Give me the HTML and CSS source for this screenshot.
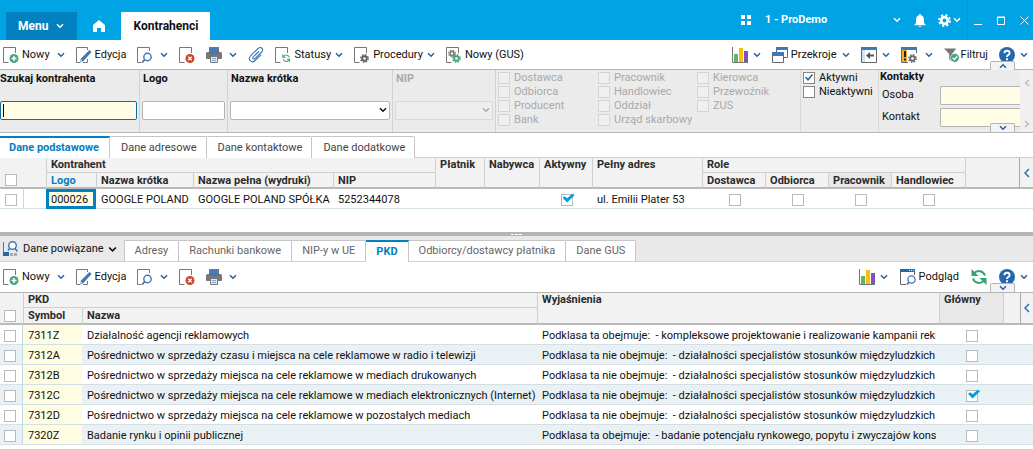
FILE: index.html
```html
<!DOCTYPE html>
<html lang="pl">
<head>
<meta charset="utf-8">
<meta name="viewport" content="width=device-width, initial-scale=1">
<title>Kontrahenci</title>
<link rel="stylesheet" href="styles.css">
</head>
<body>
<svg class="sprite" aria-hidden="true">
  <symbol id="chev" viewBox="0 0 8 6"><path d="M1 1.2 4 4.2 7 1.2" fill="none" stroke="currentColor" stroke-width="1.500"/></symbol>
  <symbol id="doc" viewBox="0 0 16 16"><path d="M5.500 15.500H.5V.5H12.500V6" fill="none" stroke="#777"/></symbol>
  <symbol id="gear" viewBox="0 0 12 12"><circle cx="6" cy="6" r="3" fill="none" stroke="currentColor" stroke-width="2.400"/><circle cx="6" cy="6" r="4.900" fill="none" stroke="currentColor" stroke-width="2" stroke-dasharray="2.100 1.749"/></symbol>
  <symbol id="doc-plus" viewBox="0 0 16 16"><use href="#doc"/><circle cx="11" cy="11.500" r="4.500" fill="#4ba57c"/><path d="M11 9v5M8.500 11.500h5" stroke="#fff" stroke-width="1.500"/></symbol>
  <symbol id="doc-pen" viewBox="0 0 16 16"><path d="M4 15.500H.5V.5H11.500V3M11.500 12v3.500H7" fill="none" stroke="#777"/><path d="m4 15.500 1-4L13.500 3l2 2L7 14.500z" fill="#3f77b8"/><path d="m4 15.500 1-3 1.800 1.800z" fill="#c4d6ea"/></symbol>
  <symbol id="doc-find" viewBox="0 0 16 16"><path d="M4.500 15.500H.5V.5H12.500V4" fill="none" stroke="#777"/><circle cx="10.500" cy="10" r="3.700" fill="#fff" stroke="#3f77b8" stroke-width="1.400"/><path d="m7.800 12.500-2.600 3" stroke="#3f77b8" stroke-width="1.800"/></symbol>
  <symbol id="doc-x" viewBox="0 0 16 16"><use href="#doc"/><circle cx="11" cy="11.500" r="4.500" fill="#cc4629"/><path d="m9.300 9.800 3.400 3.400m0-3.400-3.400 3.400" stroke="#fff" stroke-width="1.400"/></symbol>
  <symbol id="print" viewBox="0 0 16 16"><path d="M3 0h10v5H3z" fill="#777"/><path d="M4 1h8v4H4z" fill="#4b79b4"/><path d="M1.500 5h13q1.500 0 1.500 1.500V11q0 1-1 1H1q-1 0-1-1V6.500Q0 5 1.500 5z" fill="#777"/><path d="M3 4h10v2.500H3z" fill="#3f77b8"/><path d="M4.500 9.500h7v6h-7z" fill="#e3edf7" stroke="#777"/><path d="M6 11.500h4M6 13.500h4" stroke="#7fa5cf"/></symbol>
  <symbol id="clip" viewBox="0 0 16 16"><path d="m10.800 4.500-5.600 5.400c-1.300 1.300.4 3 1.700 1.700l6.800-6.600c2.800-2.800-1-6-3.600-3.500L2.500 8.800c-3.500 3.500 1.400 8 4.600 4.700l5.600-5.400" fill="none" stroke="#3f77b8" stroke-width="1.100" stroke-linecap="round"/></symbol>
  <symbol id="sync" viewBox="0 0 16 16"><path d="M14 6.500A6.300 6.300 0 0 0 3 4.500M2 9.500a6.300 6.300 0 0 0 11 2" fill="none" stroke="currentColor" stroke-width="2"/><path d="M.5 0v7h7L5 4.600zM15.500 16V9h-7l2.500 2.400z" fill="currentColor"/></symbol>
  <symbol id="doc-sync" viewBox="0 0 16 16"><use href="#doc"/><use href="#sync" x="7" y="7" width="8.500" height="8.500" color="#4ba57c"/></symbol>
  <symbol id="doc-gear" viewBox="0 0 16 16"><use href="#doc"/><use href="#gear" x="6" y="7" width="9" height="9" color="#606060"/></symbol>
  <symbol id="doc-gears" viewBox="0 0 16 16"><path d="M5.500 15.500H.5V.5H12.500V6" fill="none" stroke="#777"/><use href="#gear" x="2" y="2.500" width="8" height="8" color="#777"/><use href="#gear" x="6" y="7" width="9" height="9" color="#4ba57c"/></symbol>
  <symbol id="chart" viewBox="0 0 16 16"><path d="M.5 0v15.500H16" fill="none" stroke="#777"/><path d="M2 7h4v8H2z" fill="#5cba5c"/><path d="M7 1h4v14H7z" fill="#fdbb0b"/><path d="M12 4h4v11h-4z" fill="#7b52c0"/></symbol>
  <symbol id="windows" viewBox="0 0 16 16"><path d="M4.500 5V.5h11v10H12M.5 6v9.500h11V6" fill="none" stroke="#666"/><path d="M4 0h12v3H4zM0 5h12v4H0z" fill="#3f77b8"/></symbol>
  <symbol id="panel" viewBox="0 0 16 16"><path d="M.5.500h15v15H.5z" fill="#fff" stroke="#666"/><path d="M0 0h16v3H0z" fill="#3f77b8"/><path d="M1 3h3v12H1z" fill="#cfe6f7"/><path d="M5 8.500 9 5v2.500h4v2H9V12z" fill="#555"/></symbol>
  <symbol id="alert" viewBox="0 0 16 16"><path d="M.5.500h15V6M.5.500v15H7" fill="none" stroke="#666"/><path d="M0 0h16v3H0z" fill="#3f77b8"/><path d="M1 3h5v12H1z" fill="#f2b02c"/><path d="M3 4h2v6H3zM3 11.500h2v2H3z" fill="#222"/><use href="#gear" x="7" y="7" width="9" height="9" color="#6c6c6c"/></symbol>
  <symbol id="funnel" viewBox="0 0 17 16"><path d="M0 1h13L8.500 7v8l-3-2.500V7z" fill="#777"/><circle cx="11.500" cy="11" r="4.700" fill="#4ba57c" stroke="#fff" stroke-width=".6"/><path d="m9.200 11 1.800 1.800 3-3.300" fill="none" stroke="#fff" stroke-width="1.300"/></symbol>
  <symbol id="help" viewBox="0 0 16 16"><circle cx="8" cy="8" r="8" fill="#2567ae"/><path d="M5.400 6.200Q5.500 3.800 8 3.800t2.600 2.200Q10.600 7.300 9 8.200 8 8.800 8 10" fill="none" stroke="#fff" stroke-width="1.900"/><path d="M7 11.200h2v2H7z" fill="#fff"/></symbol>
  <symbol id="preview" viewBox="0 0 16 16"><path d="M6 15.500H.5V.5h14V6" fill="none" stroke="#666"/><path d="M0 0h15v3H0z" fill="#2567ae"/><path d="M9 1.500h1M11 1.500h1M13 1.500h1" stroke="#fff"/><circle cx="11.500" cy="10.500" r="3.600" fill="#fff" stroke="#3f77b8" stroke-width="1.300"/><path d="m9 13-2 2.500" stroke="#3f77b8" stroke-width="1.700"/></symbol>
</svg>

<header class="topbar">
  <button class="menu-btn" type="button">Menu <svg class="chev"><use href="#chev"/></svg></button>
  <button class="home" type="button" aria-label="Start"><svg viewBox="0 0 12 12" width="12" height="12"><path d="M6 0 12 5v7H8V8H4v4H0V5z" fill="#fff"/></svg></button>
  <button class="page-tab" type="button">Kontrahenci</button>
  <div class="top-right">
    <svg class="apps" viewBox="0 0 10 10" width="10" height="10"><path d="M0 0h4v4H0zM6 0h4v4H6zM0 6h4v4H0zM6 6h4v4H6z" fill="#fff"/></svg>
    <button class="company" type="button"><span>1 - ProDemo</span><svg class="chev"><use href="#chev"/></svg></button>
    <button class="bell" type="button" aria-label="Powiadomienia"><svg viewBox="0 0 12 13" width="12" height="13"><path d="M6 0q1 0 1 1.200Q10 2 10 6v3l1.500 1.500v.8H.5v-.8L2 9V6q0-4 3-4.800Q5 0 6 0zM4.500 12h3q-1.500 1.800-3 0z" fill="#fff"/></svg></button>
    <button class="settings" type="button" aria-label="Ustawienia"><svg width="13" height="13"><use href="#gear"/></svg><svg class="chev"><use href="#chev"/></svg></button>
    <div class="window-btns">
      <button type="button" aria-label="Minimalizuj"><svg viewBox="0 0 9 9" width="9" height="9"><path d="M0 8.500h8" stroke="#fff"/></svg></button>
      <button type="button" aria-label="Maksymalizuj"><svg viewBox="0 0 9 9" width="9" height="9"><path d="M.5 1.500h7v7h-7zM0 1h8" fill="none" stroke="#fff"/></svg></button>
      <button type="button" aria-label="Zamknij"><svg viewBox="0 0 9 9" width="9" height="9"><path d="m.5.500 8 8m0-8-8 8" stroke="#fff"/></svg></button>
    </div>
  </div>
</header>

<div class="toolbar main-tools">
  <div class="tools">
    <div class="split"><button type="button" class="tool"><svg class="ico"><use href="#doc-plus"/></svg>Nowy</button><button type="button" class="drop" aria-label="Więcej"><svg class="chev"><use href="#chev"/></svg></button></div>
    <button type="button" class="tool"><svg class="ico"><use href="#doc-pen"/></svg>Edycja</button>
    <div class="split"><button type="button" class="tool" aria-label="Szukaj"><svg class="ico"><use href="#doc-find"/></svg></button><button type="button" class="drop" aria-label="Więcej"><svg class="chev"><use href="#chev"/></svg></button></div>
    <button type="button" class="tool" aria-label="Usuń"><svg class="ico"><use href="#doc-x"/></svg></button>
    <div class="split"><button type="button" class="tool" aria-label="Drukuj"><svg class="ico"><use href="#print"/></svg></button><button type="button" class="drop" aria-label="Więcej"><svg class="chev"><use href="#chev"/></svg></button></div>
    <button type="button" class="tool" aria-label="Załączniki"><svg class="ico"><use href="#clip"/></svg></button>
    <div class="split tight"><button type="button" class="tool"><svg class="ico"><use href="#doc-sync"/></svg>Statusy</button><button type="button" class="drop" aria-label="Więcej"><svg class="chev"><use href="#chev"/></svg></button></div>
    <div class="split tight"><button type="button" class="tool"><svg class="ico"><use href="#doc-gear"/></svg>Procedury</button><button type="button" class="drop" aria-label="Więcej"><svg class="chev"><use href="#chev"/></svg></button></div>
    <button type="button" class="tool"><svg class="ico"><use href="#doc-gears"/></svg>Nowy (GUS)</button>
  </div>
  <div class="tools">
    <div class="split near"><button type="button" class="tool" aria-label="Wykres"><svg class="ico"><use href="#chart"/></svg></button><button type="button" class="drop" aria-label="Więcej"><svg class="chev"><use href="#chev"/></svg></button></div>
    <div class="split near"><button type="button" class="tool"><svg class="ico"><use href="#windows"/></svg>Przekroje</button><button type="button" class="drop" aria-label="Więcej"><svg class="chev"><use href="#chev"/></svg></button></div>
    <div class="split near"><button type="button" class="tool" aria-label="Panel"><svg class="ico"><use href="#panel"/></svg></button><button type="button" class="drop" aria-label="Więcej"><svg class="chev"><use href="#chev"/></svg></button></div>
    <div class="split far"><button type="button" class="tool" aria-label="Alerty"><svg class="ico"><use href="#alert"/></svg></button><button type="button" class="drop" aria-label="Więcej"><svg class="chev"><use href="#chev"/></svg></button></div>
    <button type="button" class="tool snug"><svg class="ico"><use href="#funnel"/></svg>Filtruj</button>
    <div class="split near"><button type="button" class="tool" aria-label="Pomoc"><svg class="ico"><use href="#help"/></svg></button><button type="button" class="drop" aria-label="Więcej"><svg class="chev"><use href="#chev"/></svg></button></div>
  </div>
</div>

<form class="filters">
  <div class="field f-search"><label for="q">Szukaj kontrahenta</label><div class="caret-box"><input id="q" type="text"><i class="caret"></i></div></div>
  <div class="field f-logo"><label for="logo">Logo</label><input id="logo" type="text"></div>
  <div class="field f-name"><label for="name">Nazwa krótka</label><div class="pick"><select id="name"><option></option></select><svg class="chev"><use href="#chev"/></svg></div></div>
  <div class="field f-nip off"><label for="nip">NIP</label><div class="pick"><select id="nip" disabled><option></option></select><svg class="chev"><use href="#chev"/></svg></div></div>
  <div class="checks roles off">
    <label><input type="checkbox" disabled>Dostawca</label><label><input type="checkbox" disabled>Odbiorca</label><label><input type="checkbox" disabled>Producent</label><label><input type="checkbox" disabled>Bank</label>
    <label><input type="checkbox" disabled>Pracownik</label><label><input type="checkbox" disabled>Handlowiec</label><label><input type="checkbox" disabled>Oddział</label><label><input type="checkbox" disabled>Urząd skarbowy</label>
    <label><input type="checkbox" disabled>Kierowca</label><label><input type="checkbox" disabled>Przewoźnik</label><label><input type="checkbox" disabled>ZUS</label>
  </div>
  <div class="checks state">
    <label><input type="checkbox" checked>Aktywni</label><label><input type="checkbox">Nieaktywni</label>
  </div>
  <div class="contacts">
    <b>Kontakty</b>
    <div class="contact-row"><label for="person">Osoba</label><input id="person" type="text"></div>
    <div class="contact-row"><label for="contact">Kontakt</label><input id="contact" type="text"></div>
  </div>
  <div class="side-scroll">
    <button type="button" aria-label="W lewo"><svg viewBox="0 0 6 8" width="6" height="8"><path d="M5 1 1.500 4 5 7" fill="none" stroke="#b5b5b5" stroke-width="1.200"/></svg></button>
    <button type="button" aria-label="W prawo"><svg viewBox="0 0 6 8" width="6" height="8"><path d="M1 1 4.500 4 1 7" fill="none" stroke="#b5b5b5" stroke-width="1.200"/></svg></button>
  </div>
  <button type="button" class="handle top" aria-label="Zwiń"><svg class="chev"><use href="#chev"/></svg></button>
  <button type="button" class="handle bottom" aria-label="Rozwiń"><svg class="chev"><use href="#chev"/></svg></button>
</form>

<nav class="tabs">
  <button type="button" class="tab active">Dane podstawowe</button>
  <button type="button" class="tab">Dane adresowe</button>
  <button type="button" class="tab">Dane kontaktowe</button>
  <button type="button" class="tab">Dane dodatkowe</button>
  <span class="rest"></span>
</nav>

<div class="grid-area">
<table class="grid contractors">
  <colgroup><col class="w24"><col class="w22"><col class="w50"><col class="w97"><col class="w140"><col class="w102"><col class="w49"><col class="w55"><col class="w53"><col class="w110"><col class="w63"><col class="w63"><col class="w63"><col class="w74"><col><col class="w14"></colgroup>
  <thead>
    <tr>
      <th rowspan="2" class="pick-all"><input type="checkbox" aria-label="Zaznacz wszystko"></th><th rowspan="2"></th>
      <th colspan="4" class="line under">Kontrahent</th>
      <th rowspan="2" class="line">Płatnik</th><th rowspan="2" class="line">Nabywca</th><th rowspan="2" class="line">Aktywny</th><th rowspan="2" class="line">Pełny adres</th>
      <th colspan="4" class="line under">Role</th>
      <th rowspan="2" class="line"></th>
      <th rowspan="2" class="expand"><button type="button" aria-label="Rozwiń panel"><svg viewBox="0 0 6 10" width="6" height="10"><path d="M5 1 1 5l4 4" fill="none" stroke="currentColor" stroke-width="1.400"/></svg></button></th>
    </tr>
    <tr>
      <th class="line sorted">Logo</th><th class="line">Nazwa krótka</th><th class="line">Nazwa pełna (wydruki)</th><th class="line">NIP</th>
      <th class="line">Dostawca</th><th class="line">Odbiorca</th><th class="line hot">Pracownik</th><th class="line">Handlowiec</th>
    </tr>
  </thead>
  <tbody>
    <tr>
      <td class="pick-row"><input type="checkbox" aria-label="Zaznacz"></td><td class="soft"></td>
      <td class="current">000026</td><td>GOOGLE POLAND</td><td>GOOGLE POLAND SPÓŁKA</td><td>5252344078</td><td></td><td></td>
      <td class="mid"><input type="checkbox" checked aria-label="Aktywny"></td><td>ul. Emilii Plater 53</td>
      <td class="mid"><input type="checkbox" aria-label="Dostawca"></td><td class="mid"><input type="checkbox" aria-label="Odbiorca"></td><td class="mid"><input type="checkbox" aria-label="Pracownik"></td><td class="mid"><input type="checkbox" aria-label="Handlowiec"></td>
      <td></td><td></td>
    </tr>
  </tbody>
</table>
</div>

<div class="splitter"><i></i><i></i><i></i></div>

<div class="related">
  <button type="button" class="related-btn"><svg viewBox="0 0 16 16" width="16" height="16"><path d="M.5 1v12" stroke="#3f77b8"/><path d="M0 11h6v4H0z" fill="#2567ae"/><path d="M7 12h3v3H7zM11 12h3v3h-3z" fill="#aaa"/><circle cx="9.500" cy="4.500" r="3.800" fill="#fff" stroke="#3f77b8" stroke-width="1.400"/><path d="m12 7.500 2.500 3M6.500 7.500 5 9.500" stroke="#3f77b8" stroke-width="1.600"/></svg>Dane powiązane<svg class="chev wide"><use href="#chev"/></svg></button>
  <nav class="subtabs">
    <button type="button" class="tab">Adresy</button>
    <button type="button" class="tab">Rachunki bankowe</button>
    <button type="button" class="tab">NIP-y w UE</button>
    <button type="button" class="tab active">PKD</button>
    <button type="button" class="tab">Odbiorcy/dostawcy płatnika</button>
    <button type="button" class="tab">Dane GUS</button>
  </nav>
</div>

<div class="toolbar sub-tools">
  <div class="tools">
    <div class="split"><button type="button" class="tool"><svg class="ico"><use href="#doc-plus"/></svg>Nowy</button><button type="button" class="drop" aria-label="Więcej"><svg class="chev"><use href="#chev"/></svg></button></div>
    <button type="button" class="tool"><svg class="ico"><use href="#doc-pen"/></svg>Edycja</button>
    <div class="split"><button type="button" class="tool" aria-label="Szukaj"><svg class="ico"><use href="#doc-find"/></svg></button><button type="button" class="drop" aria-label="Więcej"><svg class="chev"><use href="#chev"/></svg></button></div>
    <button type="button" class="tool" aria-label="Usuń"><svg class="ico"><use href="#doc-x"/></svg></button>
    <div class="split"><button type="button" class="tool" aria-label="Drukuj"><svg class="ico"><use href="#print"/></svg></button><button type="button" class="drop" aria-label="Więcej"><svg class="chev"><use href="#chev"/></svg></button></div>
  </div>
  <div class="tools roomy">
    <div class="split near"><button type="button" class="tool" aria-label="Wykres"><svg class="ico"><use href="#chart"/></svg></button><button type="button" class="drop" aria-label="Więcej"><svg class="chev"><use href="#chev"/></svg></button></div>
    <button type="button" class="tool"><svg class="ico"><use href="#preview"/></svg>Podgląd</button>
    <button type="button" class="tool refresh" aria-label="Odśwież"><svg class="ico"><use href="#sync"/></svg></button>
    <div class="split near"><button type="button" class="tool" aria-label="Pomoc"><svg class="ico"><use href="#help"/></svg></button><button type="button" class="drop" aria-label="Więcej"><svg class="chev"><use href="#chev"/></svg></button></div>
  </div>
  <button type="button" class="handle bottom" aria-label="Rozwiń"><svg class="chev"><use href="#chev"/></svg></button>
</div>

<table class="grid codes">
  <colgroup><col class="w23"><col class="w59"><col class="w455"><col><col class="w64"><col class="w17"><col class="w13"></colgroup>
  <thead>
    <tr>
      <th rowspan="2" class="pick-all"><input type="checkbox" aria-label="Zaznacz wszystko"></th>
      <th colspan="2" class="line under">PKD</th><th rowspan="2" class="line">Wyjaśnienia</th><th rowspan="2" class="line hot">Główny</th><th rowspan="2" class="line"></th>
      <th rowspan="2" class="expand"><button type="button" aria-label="Rozwiń panel"><svg viewBox="0 0 6 10" width="6" height="10"><path d="M5 1 1 5l4 4" fill="none" stroke="currentColor" stroke-width="1.400"/></svg></button></th>
    </tr>
    <tr><th class="line">Symbol</th><th class="line">Nazwa</th></tr>
  </thead>
  <tbody>
    <tr><td class="pick-row"><input type="checkbox" aria-label="Zaznacz"></td><td class="key">7311Z</td><td>Działalność agencji reklamowych</td><td><div class="cut">Podklasa ta obejmuje:&nbsp; - kompleksowe projektowanie i realizowanie kampanii reklamowych</div></td><td class="mid"><input type="checkbox" aria-label="Główny"></td><td></td><td></td></tr>
    <tr><td class="pick-row"><input type="checkbox" aria-label="Zaznacz"></td><td class="key">7312A</td><td>Pośrednictwo w sprzedaży czasu i miejsca na cele reklamowe w radio i telewizji</td><td><div class="cut">Podklasa ta nie obejmuje:&nbsp; - działalności specjalistów stosunków międzyludzkich</div></td><td class="mid"><input type="checkbox" aria-label="Główny"></td><td></td><td></td></tr>
    <tr><td class="pick-row"><input type="checkbox" aria-label="Zaznacz"></td><td class="key">7312B</td><td>Pośrednictwo w sprzedaży miejsca na cele reklamowe w mediach drukowanych</td><td><div class="cut">Podklasa ta nie obejmuje:&nbsp; - działalności specjalistów stosunków międzyludzkich</div></td><td class="mid"><input type="checkbox" aria-label="Główny"></td><td></td><td></td></tr>
    <tr><td class="pick-row"><input type="checkbox" aria-label="Zaznacz"></td><td class="key">7312C</td><td>Pośrednictwo w sprzedaży miejsca na cele reklamowe w mediach elektronicznych (Internet)</td><td><div class="cut">Podklasa ta nie obejmuje:&nbsp; - działalności specjalistów stosunków międzyludzkich</div></td><td class="mid"><input type="checkbox" checked aria-label="Główny"></td><td></td><td></td></tr>
    <tr><td class="pick-row"><input type="checkbox" aria-label="Zaznacz"></td><td class="key">7312D</td><td>Pośrednictwo w sprzedaży miejsca na cele reklamowe w pozostałych mediach</td><td><div class="cut">Podklasa ta nie obejmuje:&nbsp; - działalności specjalistów stosunków międzyludzkich</div></td><td class="mid"><input type="checkbox" aria-label="Główny"></td><td></td><td></td></tr>
    <tr><td class="pick-row"><input type="checkbox" aria-label="Zaznacz"></td><td class="key">7320Z</td><td>Badanie rynku i opinii publicznej</td><td><div class="cut">Podklasa ta obejmuje:&nbsp; - badanie potencjału rynkowego, popytu i zwyczajów kons</div></td><td class="mid"><input type="checkbox" aria-label="Główny"></td><td></td><td></td></tr>
  </tbody>
</table>
</body>
</html>
```

FILE: styles.css
```css
* { box-sizing: border-box; }
body { margin: 0; background: #fff; color: #111; font: 11px/14px Roboto, "Liberation Sans", sans-serif; }
button, input, select { font: inherit; color: inherit; margin: 0; }
button { border: 0; padding: 0; background: none; white-space: nowrap; }
svg { display: block; flex: none; }
.sprite { position: absolute; width: 0; height: 0; }
.chev { width: 8px; height: 6px; }
.chev.wide { width: 9px; height: 7px; }
.ico { width: 16px; height: 16px; }

/* top bar */
.topbar { display: flex; align-items: flex-end; height: 40px; padding-left: 6px; background: #00a4e4; color: #fff; }
.menu-btn { display: flex; align-items: center; gap: 8px; height: 28px; padding: 0 13px 0 12px; background: #0380c0; font-weight: 700; font-size: 12px; }
.home { height: 28px; padding: 0 16px; }
.page-tab { height: 28px; padding: 0 12px; background: #fff; color: #111; font-weight: 700; font-size: 12px; border-radius: 1px 1px 0 0; }
.top-right { display: flex; align-items: center; height: 40px; margin-left: auto; }
.company { display: flex; align-items: center; justify-content: space-between; width: 136px; margin-left: 14px; font-weight: 700; }
.bell { margin-left: 13px; }
.settings { display: flex; align-items: center; gap: 2px; margin: 0 6px 0 12px; }
.window-btns { display: flex; align-items: center; gap: 14px; height: 40px; padding: 0 4px 0 6px; border-left: 1px solid #0b93cb; }

/* toolbars */
.toolbar { position: relative; display: flex; justify-content: space-between; height: 30px; padding: 0 5px 0 3px; border-bottom: 1px solid #b5b5b5; }
.sub-tools { height: 31px; }
.tools { display: flex; align-items: center; gap: 11px; }
.tools.roomy { gap: 12px; }
.tool { display: flex; align-items: center; gap: 3px; line-height: 16px; }
.tool.snug { gap: 1px; }
.split { display: flex; align-items: center; gap: 7px; }
.split.tight { gap: 4px; }
.split.near { gap: 5px; }
.split.far { gap: 8px; }
.drop, .handle { color: #2b5f9e; }
.refresh { color: #35a36c; }
.handle { position: absolute; right: 18px; width: 25px; height: 9px; display: flex; align-items: center; justify-content: center; background: #f3f3f3; border: 1px solid #b5b5b5; border-bottom: 0; border-radius: 2px 2px 0 0; }
.handle.bottom { bottom: 0; }
.handle.top { top: -9px; }
.handle.top .chev { transform: rotate(180deg); }

/* filter panel */
.filters { position: relative; display: flex; height: 63px; background: #ebebeb; border-bottom: 1px solid #b5b5b5; }
.field { display: flex; flex-direction: column; justify-content: space-between; padding: 2px 2px 12px; border-right: 1px solid #d2d2d2; font-weight: 700; }
.f-search { width: 140px; padding-left: 0; }
.f-logo { width: 88px; }
.f-name { width: 165px; }
.f-nip { width: 103px; }
.f-logo label, .f-name label, .f-nip label { padding-left: 1px; }
input[type="text"], select { width: 100%; height: 19px; padding: 0 4px; background: #fff; border: 1px solid #b5b5b5; border-radius: 2px; outline: 0; }
.caret-box, .pick { position: relative; height: 19px; }
#q { background: #fffde6; border-color: #0a6fa8; }
.caret { position: absolute; left: 3px; top: 3px; width: 1px; height: 13px; background: #000; }
select { display: block; appearance: none; }
.pick .chev { position: absolute; right: 3px; top: 6px; }
.off { color: #a9a9a9; }
.off select { background: #f0f0f0; border-color: #d0d0d0; }
.checks { padding: 1px 2px; border-right: 1px solid #d9d9d9; display: grid; grid-auto-flow: column; align-content: start; }
.checks label { display: flex; align-items: center; gap: 4px; height: 14px; line-height: 16px; white-space: nowrap; }
.roles { grid-template-rows: repeat(4, 14px); grid-template-columns: 100px 99px 101px; width: 305px; }
.state { grid-template-rows: repeat(2, 14px); width: 78px; }
.contacts { flex: 1; min-width: 0; padding: 0 0 0 1px; overflow: hidden; }
.contacts b { display: block; height: 14px; line-height: 13px; }
.contact-row { display: flex; align-items: center; height: 22px; padding-left: 2px; }
.contact-row label { flex: none; width: 58px; }
.contact-row input[type="text"] { background: #fffde6; border-right: 0; border-radius: 2px 0 0 2px; }
.side-scroll { display: flex; flex-direction: column; justify-content: space-between; align-items: center; width: 13px; padding: 9px 0 4px; background: #f0f0f0; }

/* check boxes */
input[type="checkbox"] { appearance: none; display: block; position: relative; flex: none; width: 12px; height: 12px; background: #fff; border: 1px solid #b9b9b9; }
.off input[type="checkbox"] { background: #f0f0f0; border-color: #d4d4d4; }
.state input[type="checkbox"] { border-color: #888; }
.state input:checked::after { content: ""; position: absolute; left: 1px; top: 1px; width: 8px; height: 7px; background: #2b5f9e; clip-path: polygon(0 50%, 12% 36%, 38% 66%, 88% 0, 100% 14%, 38% 100%); }
.grid input:checked::after { content: ""; position: absolute; left: 1px; top: -1px; width: 12px; height: 9px; background: #009fe0; clip-path: polygon(0 48%, 18% 30%, 38% 54%, 84% 0, 100% 20%, 38% 100%); }

/* tabs */
.tabs { display: flex; align-items: flex-end; height: 25px; }
.tab { height: 22px; padding: 0 10px; border: 1px solid #c6c6c6; border-left: 0; border-bottom: 0; background: #fff; color: #444; border-radius: 0 2px 0 0; }
.tabs .tab { padding: 0 9px 0 11px; }
.tab.active { color: #0380c0; font-weight: 700; border-top: 2px solid #0380c0; border-radius: 0; }
.tabs .tab.active { padding: 0 10px 0 9px; }
.rest { flex: 1; height: 1px; background: #cfcfcf; }

/* tables */
.grid-area { height: 74px; }
.grid { width: 100%; table-layout: fixed; border-collapse: separate; border-spacing: 0; }
.grid th { height: 15px; padding: 0 0 0 4px; background: #f2f2f2; color: #2b2b2b; text-align: left; vertical-align: top; font-weight: 700; line-height: 13px; white-space: nowrap; }
.grid th.line { border-left: 1px solid #cfcfcf; }
.grid th.under { border-bottom: 1px solid #cfcfcf; }
.grid thead tr:last-child th, .grid th[rowspan] { border-bottom: 2px solid #b9b9b9; }
.grid thead tr:last-child th { height: 16px; padding-top: 1px; }
.grid th.sorted { color: #0380c0; }
.grid th.hot { background: #e8e8e8; }
.grid th.pick-all { padding-bottom: 1px; vertical-align: bottom; }
.grid th.expand { padding: 0; border-left: 1px solid #a9a9a9; vertical-align: middle; color: #2567ae; }
.expand button { display: block; margin: 0 auto; }
.grid td { height: 20px; padding: 2px 0 0 5px; border-bottom: 1px solid #d5e0e6; white-space: nowrap; overflow: hidden; line-height: 14px; }
.grid td.pick-row { border-right: 1px solid #c4d8e8; }
.grid td.mid { padding-left: 2px; overflow: visible; }
.grid .mid input { margin: 0 auto; }
.grid td.current { background: #fffde1; outline: 3px solid #0380c0; outline-offset: -3px; }
.contractors .pick-all { padding-left: 5px; }
.codes .pick-all, .codes .pick-row { padding-left: 4px; }
.codes thead tr:last-child th { height: 17px; }
.codes thead tr:first-child th { line-height: 14px; }
.codes tbody tr:nth-child(even) { background: #e9f1f5; }
.codes td.key { background: #fffde1; }
.cut { overflow: hidden; margin-right: 3px; }
.w13 { width: 13px; } .w14 { width: 14px; } .w17 { width: 17px; } .w22 { width: 22px; } .w23 { width: 23px; } .w24 { width: 24px; }
.w49 { width: 49px; } .w50 { width: 50px; } .w53 { width: 53px; } .w55 { width: 55px; } .w59 { width: 59px; } .w63 { width: 63px; } .w64 { width: 64px; }
.w74 { width: 74px; } .w97 { width: 97px; } .w102 { width: 102px; } .w110 { width: 110px; } .w140 { width: 140px; } .w455 { width: 455px; }

/* splitter and related data */
.splitter { display: flex; justify-content: center; align-items: center; gap: 1px; height: 4px; background: #b4b4b4; }
.splitter i { width: 3px; height: 1px; background: #fff; }
.related { display: flex; align-items: flex-end; height: 26px; padding-left: 3px; background: #e9e9e9; border-bottom: 1px solid #d2d2d2; }
.related-btn { display: flex; align-items: center; gap: 4px; height: 24px; margin-right: 7px; }
.subtabs { display: flex; align-items: flex-end; border-left: 1px solid #c6c6c6; }
.subtabs .tab { height: 21px; color: #666; }
.subtabs .tab.active { height: 22px; margin-bottom: -1px; color: #0380c0; }
```
